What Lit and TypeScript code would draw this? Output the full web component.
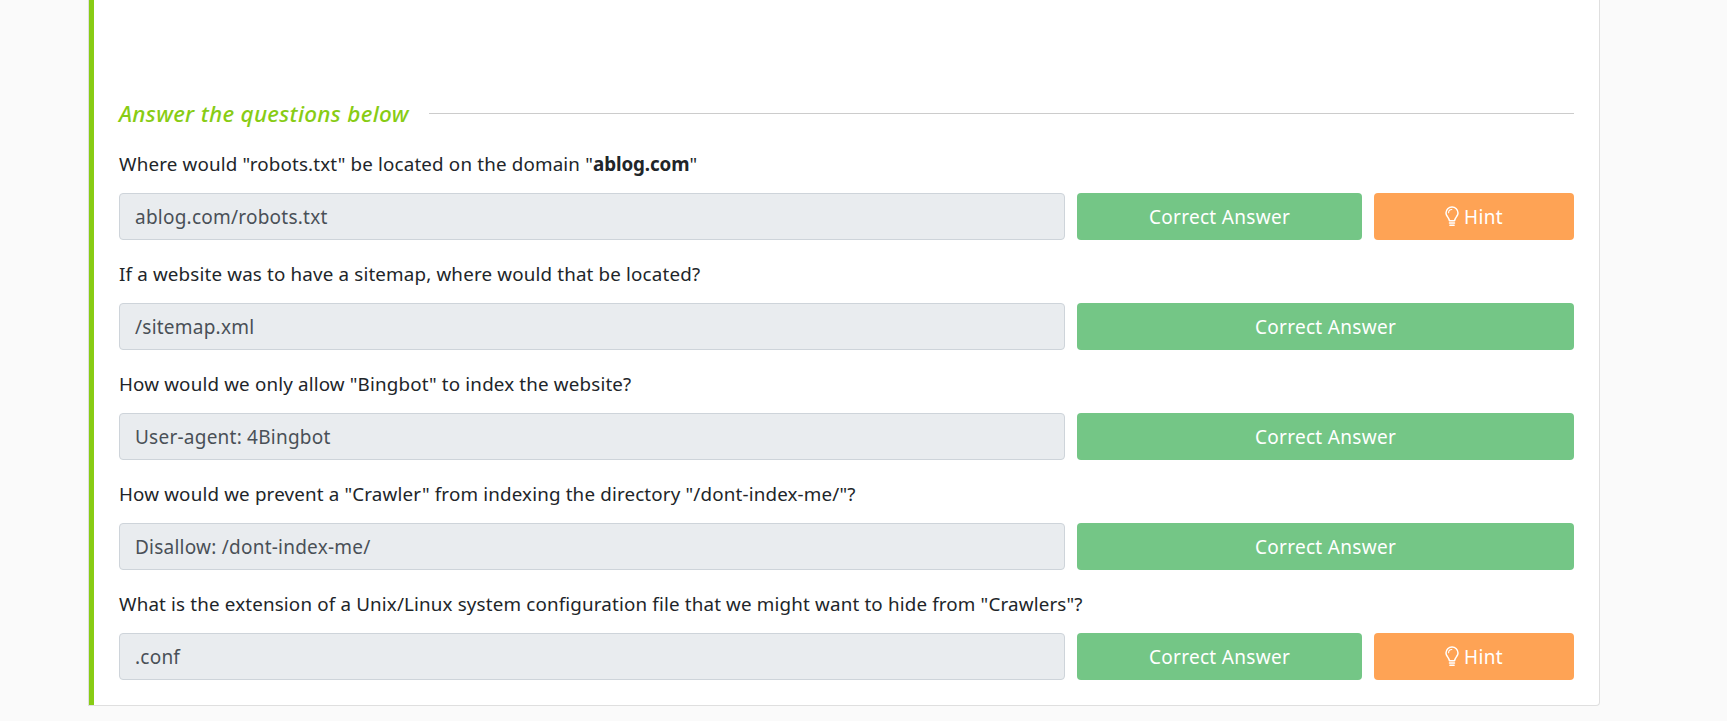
import { LitElement, css, html, nothing } from 'lit';
import { customElement } from 'lit/decorators.js';

const questions = [
  { text: html`Where would "robots.txt" be located on the domain "<b>ablog.com</b>"`, answer: 'ablog.com/robots.txt', hint: true },
  { text: html`If a website was to have a sitemap, where would that be located?`, answer: '/sitemap.xml', hint: false },
  { text: html`How would we only allow "Bingbot" to index the website?`, answer: 'User-agent: 4Bingbot', hint: false },
  { text: html`How would we prevent a "Crawler" from indexing the directory "/dont-index-me/"?`, answer: 'Disallow: /dont-index-me/', hint: false },
  { text: html`What is the extension of a Unix/Linux system configuration file that we might want to hide from "Crawlers"?`, answer: '.conf', hint: true },
];

const bulb = html`<svg class="bulb" viewBox="0 0 14 21" fill="none" stroke="currentColor" stroke-width="1.5" stroke-linecap="round" stroke-linejoin="round">
  <path d="M4.400 14.700c-.3-1.900-1.200-3.100-2-4.200C1.600 9.400 1 8.200 1 6.900 1 3.500 3.700 1 7 1s6 2.500 6 5.900c0 1.300-.6 2.500-1.400 3.600-.8 1.100-1.700 2.300-2 4.200z" />
  <path d="M4.500 17h5M4.900 19.300h4.200" />
  <path d="M3.600 6.800C3.600 4.900 5 3.500 6.800 3.500" stroke-width="1.100" />
</svg>`;

@customElement('app-root')
export class AppRoot extends LitElement {
  static styles = css`
    :host {
      display: block;
      height: 721px;
      overflow: hidden;
      background: #fafafa;
      font-family: 'Noto Sans', sans-serif;
      color: #212529;
    }

    .card {
      box-sizing: border-box;
      width: 1512px;
      height: 706px;
      margin-left: 88px;
      padding: 100px 25px 0 30px;
      background: #fff;
      border: 1px solid #dfdfdf;
      border-top: none;
      border-radius: 0 0 4px 0;
      box-shadow: inset 5px 0 0 #88cc14;
    }

    .heading {
      display: flex;
      align-items: center;
      gap: 20px;
      height: 27px;
      margin-bottom: 24px;
    }

    .heading h2 {
      margin: 0;
      font-size: 22.5px;
      letter-spacing: 0.3px;
      line-height: 27px;
      font-weight: 500;
      font-style: italic;
      color: #88cc14;
      white-space: nowrap;
    }

    .heading .rule {
      flex: 1;
      height: 1px;
      background: #ccc;
    }

    .question {
      height: 110px;
    }

    .question p {
      margin: 0 0 16px;
      font-size: 18.8px;
      letter-spacing: 0.16px;
      line-height: 26px;
    }

    .question b {
      letter-spacing: -0.1px;
    }

    .row {
      display: flex;
      gap: 12px;
    }

    .answer {
      box-sizing: border-box;
      width: 946px;
      height: 47px;
      padding: 0 15px;
      display: flex;
      align-items: center;
      font-size: 19px;
      letter-spacing: 0.23px;
      color: #495057;
      background: #e9ecef;
      border: 1px solid #ced4da;
      border-radius: 4px;
    }

    .btn {
      display: flex;
      align-items: center;
      justify-content: center;
      height: 47px;
      font-size: 19px;
      letter-spacing: 0.3px;
      color: #fff;
      border-radius: 4px;
    }

    .correct {
      flex: 1;
      background: #74c686;
    }

    .hint {
      width: 200px;
      gap: 5px;
      background: #fea355;
    }

    .bulb {
      width: 14px;
      height: 21px;
    }
  `;

  render() {
    return html`
      <div class="card">
        <div class="heading">
          <h2>Answer the questions below</h2>
          <div class="rule"></div>
        </div>
        ${questions.map(
          q => html`
            <div class="question">
              <p>${q.text}</p>
              <div class="row">
                <div class="answer">${q.answer}</div>
                <div class="btn correct">Correct Answer</div>
                ${q.hint ? html`<div class="btn hint">${bulb}Hint</div>` : nothing}
              </div>
            </div>
          `
        )}
      </div>
    `;
  }
}
